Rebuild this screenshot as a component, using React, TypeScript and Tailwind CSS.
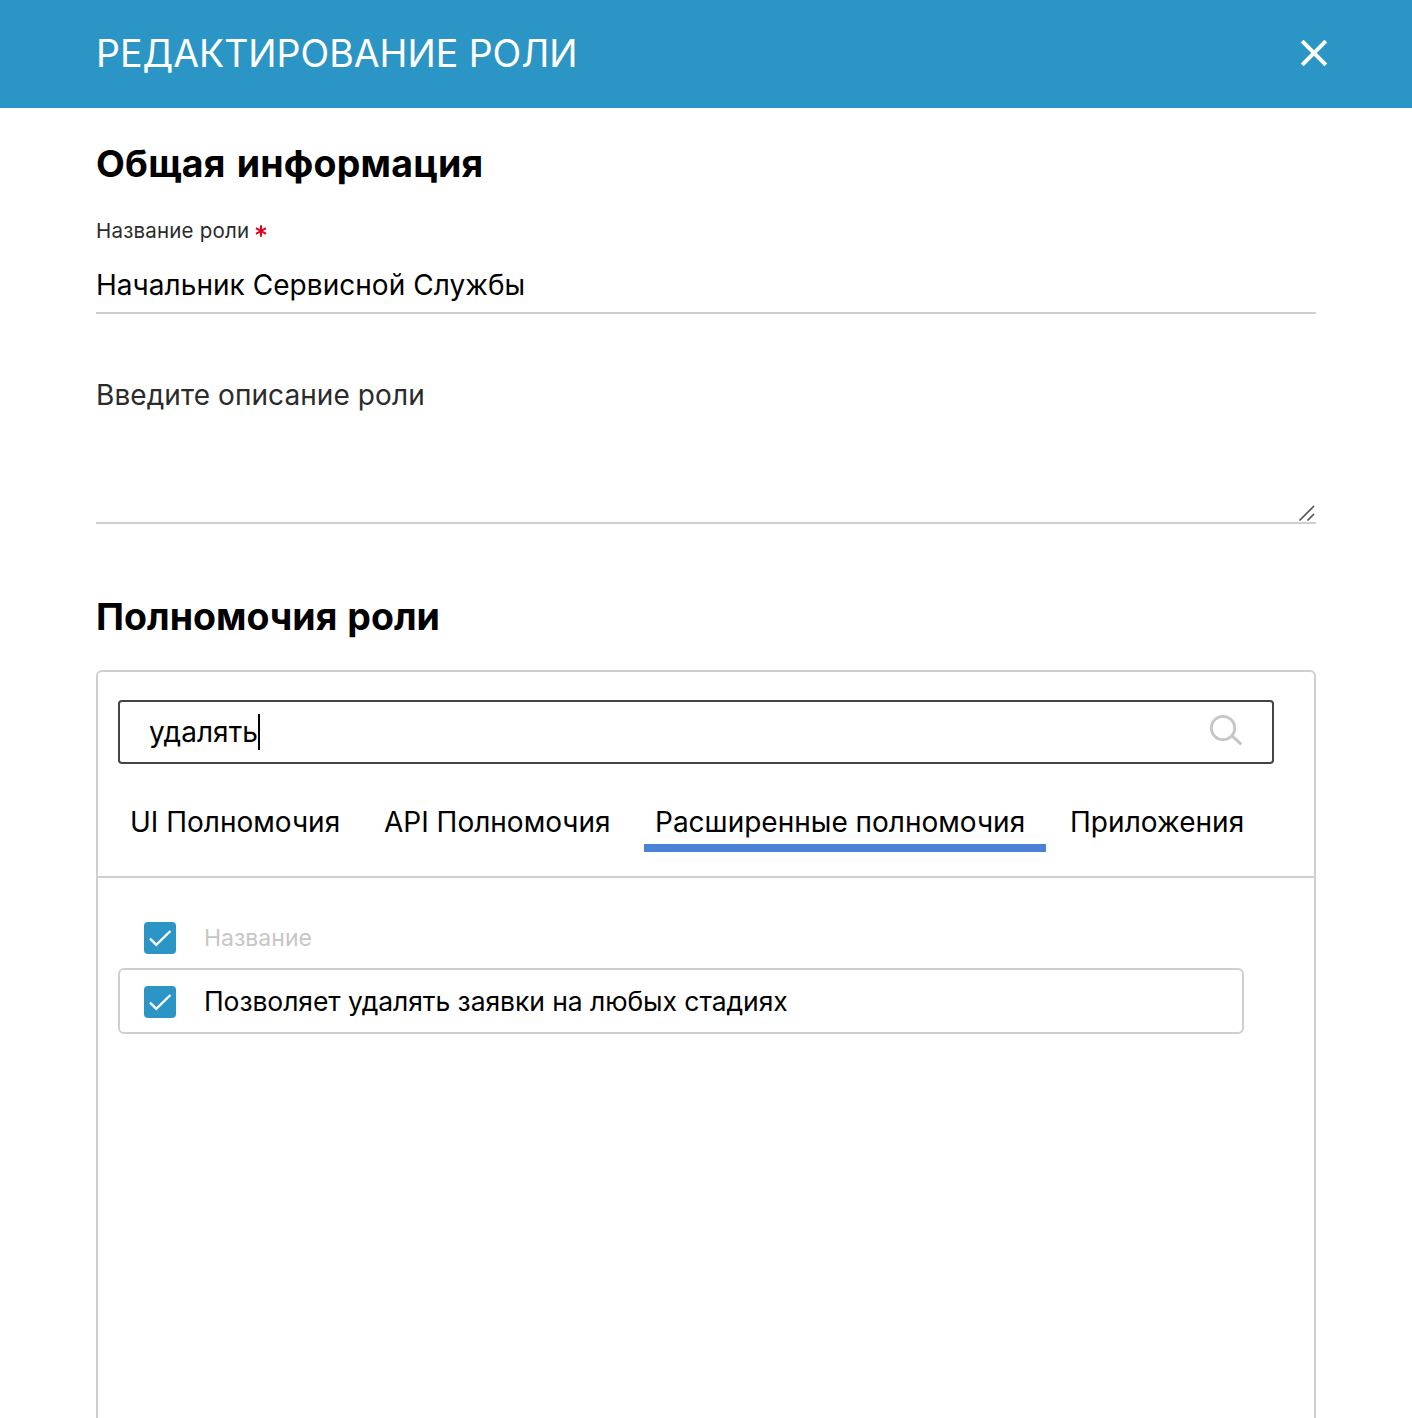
function CloseIcon() {
  return (
    <svg width="28" height="28" viewBox="0 0 28 28" fill="none" stroke="#fff" strokeWidth="4">
      <path d="M2.2 2.2 25.8 25.8M25.8 2.2 2.2 25.8" />
    </svg>
  );
}

function SearchIcon() {
  return (
    <svg className="mb-1" width="34" height="34" viewBox="0 0 34 34" fill="none" stroke="#c6c6c6" strokeWidth="2.8">
      <circle cx="14" cy="15" r="11.7" />
      <path d="M22.6 22.4 32.3 31.4" strokeWidth="3" />
    </svg>
  );
}

function Checkbox() {
  return (
    <span className="block size-8 shrink-0 rounded-[4px] bg-[#2b95c6]">
      <svg width="32" height="32" viewBox="0 0 32 32" fill="none" stroke="#fff" strokeWidth="2.4">
        <path d="M6 16.6 12.3 22.8 26.4 9" />
      </svg>
    </span>
  );
}

export default function App() {
  return (
    <div className="flex h-[1418px] flex-col overflow-hidden bg-white font-['Inter',sans-serif] whitespace-nowrap text-black">
      <header className="flex h-[108px] shrink-0 items-center justify-between bg-[#2b95c6] pr-[84px] pb-[2px] pl-24 text-white">
        <h1 className="pt-[2px] text-[37.5px] leading-[48px] tracking-[-0.02px]">РЕДАКТИРОВАНИЕ РОЛИ</h1>
        <CloseIcon />
      </header>

      <main className="flex min-h-0 flex-1 flex-col px-24 pt-8">
        <h2 className="text-[37.5px] leading-[48px] font-bold tracking-[0.2px] [word-spacing:2px]">Общая информация</h2>

        <label className="mt-[31px] flex h-6 items-center text-[20.5px] text-[#2b2b2b]">
          <span className="tracking-[0.2px]">Название роли</span>
          <svg className="ml-[6px]" width="12" height="12" viewBox="0 0 12 12" stroke="#e2001a" strokeWidth="2">
            <path d="M6 .3v11.4M1 3.1l10 5.8M11 3.1 1 8.9" />
          </svg>
        </label>
        <div className="mt-[13px] h-[58px] border-b-2 border-[#cfcfcf] pt-2 text-[28px] leading-[42px] tracking-[0.04px]">
          Начальник Сервисной Службы
        </div>

        <div className="relative mt-[50px] h-40 border-b-2 border-[#cfcfcf] pt-[10px] text-[28px] leading-[42px] tracking-[0.08px] text-[#2b2b2b]">
          Введите описание роли
          <svg className="absolute right-0 bottom-0" width="18" height="18" viewBox="0 0 18 18" stroke="#555" strokeWidth="1.7">
            <path d="M1.5 16.5 16 2M9.5 16.5 16 10" />
          </svg>
        </div>

        <h2 className="mt-[69px] text-[37.5px] leading-[48px] font-bold [word-spacing:1px]">Полномочия роли</h2>

        <section className="mt-[29px] flex-1 rounded-t-[6px] border-2 border-b-0 border-[#cfcfcf]">
          <div className="mt-7 ml-5 flex h-16 w-[1156px] items-center justify-between rounded-[4px] border-2 border-[#444] pr-[29px] pl-[29px]">
            <div className="flex items-center">
              <span className="text-[28px] leading-9 tracking-[0.06px]">удалять</span>
              <span className="h-9 w-0.5 bg-black" />
            </div>
            <SearchIcon />
          </div>

          <nav className="flex border-b-2 border-[#cfcfcf] pt-9 pb-6 pl-[22px] text-[28px] leading-[45px]">
            <div className="h-[52px] w-[254px] pl-[10px]">UI Полномочия</div>
            <div className="h-[52px] w-[270px] pl-[10px]">API Полномочия</div>
            <div className="h-[52px] w-[402px] border-b-8 border-[#4a82d6] pl-[11px]">Расширенные полномочия</div>
            <div className="h-[52px] pl-6 tracking-[0.05px]">Приложения</div>
          </nav>

          <div className="pt-11 pr-[70px] pl-5">
            <div className="flex h-8 items-center gap-7 pl-[26px] text-[23px] text-[#c6c6c6]">
              <Checkbox />
              <span className="mt-px">Название</span>
            </div>
            <div className="mt-[14px] flex h-[66px] items-start gap-7 rounded-[6px] border-2 border-[#cfcfcf] pt-4 pl-6 text-[26.5px]">
              <Checkbox />
              <span className="leading-[30px] tracking-[-0.07px]">Позволяет удалять заявки на любых стадиях</span>
            </div>
          </div>
        </section>
      </main>
    </div>
  );
}
